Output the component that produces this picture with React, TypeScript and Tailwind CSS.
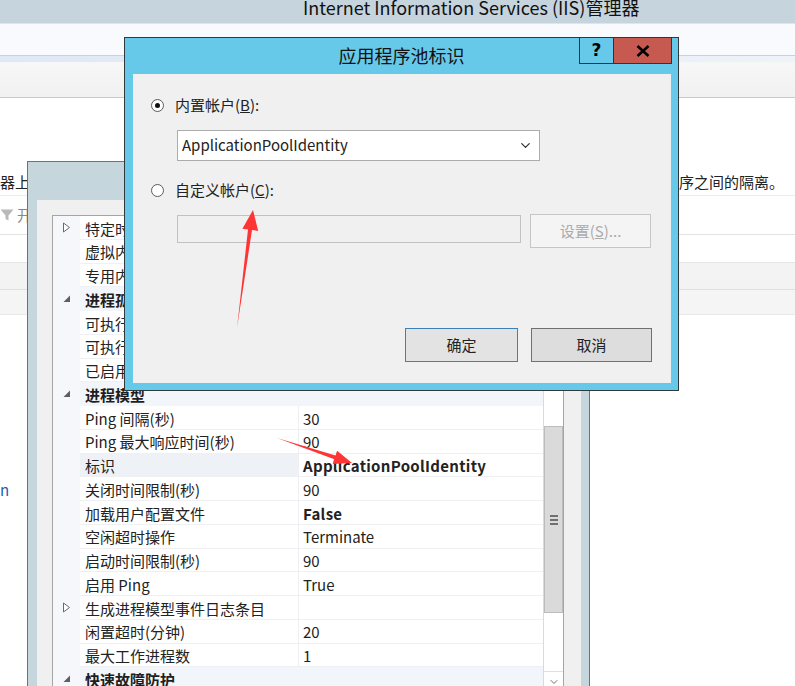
import React from 'react';
import { ChevronDown } from 'lucide-react';

type Row = {
  label: string;
  value?: string;
  cat?: boolean;
  toggle?: boolean;
  bold?: boolean;
  selected?: boolean;
};

const rows: Row[] = [
  { label: '特定时间', toggle: true, value: '' },
  { label: '虚拟内存限制(KB)', value: '0' },
  { label: '专用内存限制(KB)', value: '0' },
  { label: '进程孤立', cat: true },
  { label: '可执行文件', value: '' },
  { label: '可执行文件参数', value: '' },
  { label: '已启用', value: 'False' },
  { label: '进程模型', cat: true },
  { label: 'Ping 间隔(秒)', value: '30' },
  { label: 'Ping 最大响应时间(秒)', value: '90' },
  { label: '标识', value: 'ApplicationPoolIdentity', bold: true, selected: true },
  { label: '关闭时间限制(秒)', value: '90' },
  { label: '加载用户配置文件', value: 'False', bold: true },
  { label: '空闲超时操作', value: 'Terminate' },
  { label: '启动时间限制(秒)', value: '90' },
  { label: '启用 Ping', value: 'True' },
  { label: '生成进程模型事件日志条目', toggle: true, value: '' },
  { label: '闲置超时(分钟)', value: '20' },
  { label: '最大工作进程数', value: '1' },
  { label: '快速故障防护', cat: true },
];

const Collapsed = () => (
  <svg width="9" height="11" viewBox="0 0 9 11">
    <path d="M1.5 1 L7.5 5.5 L1.5 10 Z" fill="white" stroke="#6b6b6b" strokeWidth="1" />
  </svg>
);

const Expanded = () => (
  <svg width="8" height="8" viewBox="0 0 8 8">
    <polygon points="7,0.5 7,7 0.5,7" fill="#5f5f5f" />
  </svg>
);

const GridRow = ({ row }: { row: Row }) => (
  <div className="flex h-[23.75px] shrink-0">
    <div className="w-[27px] shrink-0 flex items-center justify-center bg-[#f5f7fa]">
      {row.cat ? <Expanded /> : row.toggle ? <Collapsed /> : null}
    </div>
    {row.cat ? (
      <div className="flex-1 flex items-center pl-[5px] pt-[3px] bg-[#f2f5fa] font-bold text-[#1e1e1e]">
        {row.label}
      </div>
    ) : (
      <>
        <div
          className={`w-[218px] shrink-0 flex items-center pl-[5px] pt-[3px] border-b border-[#eef0f4] ${
            row.selected ? 'bg-[#eef1f6]' : 'bg-white'
          }`}
        >
          {row.label}
        </div>
        <div
          className={`flex-1 flex items-center pl-[4px] pt-[3px] bg-white border-b border-l border-[#eef0f4] ${
            row.bold ? 'font-bold tracking-[0.3px]' : ''
          }`}
        >
          {row.value}
        </div>
      </>
    )}
  </div>
);

const Radio = ({ checked }: { checked?: boolean }) => (
  <span className="w-[13px] h-[13px] rounded-full border border-[#5c5c5c] bg-white flex items-center justify-center shrink-0">
    {checked && <span className="w-[5px] h-[5px] rounded-full bg-[#111]" />}
  </span>
);

export default function App() {
  return (
    <div className="relative w-[795px] h-[686px] overflow-hidden bg-white text-[15px] text-[#222] font-['Noto_Sans_CJK_SC','Noto_Sans',sans-serif]">
      {/* IIS manager behind everything */}
      <div className="flex flex-col w-full">
        <div className="h-[24px] bg-[#c6d4dd] pl-[303px] text-[18px] leading-[14px] text-[#111] border-b border-[#dfe6ea]">
          Internet Information Services (IIS)管理器
        </div>
        <div className="h-[32px] bg-[#f9fafd] border-b border-[#cdd1d6]" />
        <div className="h-[6px] bg-gradient-to-r from-[#dfe8f6] to-[#eef2f9]" />
        <div className="h-[36px] bg-gradient-to-b from-[#f7f7f7] to-[#f1f1f1] border-b border-[#c9c9c9]" />
        <div className="h-[72px]" />
        <div className="flex h-[26px] items-center border-b border-[#ececec]">
          <span className="w-[679px] shrink-0">器上</span>
          <span>序之间的隔离。</span>
        </div>
        <div className="flex items-center h-[39px] gap-[3px] text-[#888] border-b border-[#e3e3e3]">
          <svg width="14" height="14" viewBox="0 0 14 14">
            <path d="M0.5 1.5 H13.5 L8.5 7.5 V12.5 L5.5 11 V7.5 Z" fill="#b9b9b9" />
          </svg>
          <span>开</span>
        </div>
        <div className="h-[28px] border-b border-[#e6e6e6]" />
        <div className="h-[27px] bg-[#f3f3f3] border-b border-[#e0e0e0]" />
        <div className="h-[25px] bg-[#f5f5f5] border-b border-[#e8e8e8]" />
        <div className="pt-[164px] text-[#1c5cb0]">n</div>
      </div>

      {/* advanced settings window */}
      <div className="absolute left-[27px] top-[161px] w-[563px] h-[540px] bg-[#c5d6dc] border-t border-l border-r border-[#66757c] pt-[38px] pl-[9px] pr-[8px]">
        <div className="h-full bg-[#f0f0f0] pt-[15px] pl-[15px] pr-[17px]">
          <div className="h-full flex border-l border-t border-r border-[#a5a5a5] bg-white">
            <div className="flex-1 flex flex-col">
              {rows.map((r, i) => (
                <GridRow key={i} row={r} />
              ))}
            </div>
            <div className="w-[20px] shrink-0 flex flex-col bg-white border-l border-[#dadada]">
              <div className="h-[20px]" />
              <div className="h-[190px]" />
              <div className="h-[187px] bg-[#dadada] border border-[#bcbcbc] flex items-center justify-center">
                <div className="flex flex-col gap-[2px]">
                  <div className="w-[8px] h-[2px] bg-[#707070]" />
                  <div className="w-[8px] h-[2px] bg-[#707070]" />
                  <div className="w-[8px] h-[2px] bg-[#707070]" />
                </div>
              </div>
              <div className="h-[58px]" />
              <div className="h-[20px] flex items-center justify-center border-t border-[#e0e0e0]">
                <ChevronDown size={12} color="#707070" strokeWidth={2} />
              </div>
            </div>
          </div>
        </div>
      </div>

      {/* application pool identity dialog */}
      <div className="absolute left-[124px] top-[37px] w-[555px] h-[354px] bg-[#66c9e9] border border-[#2f3a3f] flex flex-col">
        <div className="relative h-[36px] shrink-0 flex items-center justify-center pb-[2px] text-[18px] text-[#111]">
          应用程序池标识
          <div className="absolute right-[6px] -top-[1px] flex">
            <div className="w-[35px] h-[27px] border border-[#333] flex items-center justify-center text-[17px] font-bold text-black font-['DejaVu_Sans',sans-serif]">
              ?
            </div>
            <div className="w-[58px] h-[27px] border border-l-0 border-[#333] bg-[#c75a50] flex items-center justify-center">
              <svg width="14" height="12" viewBox="0 0 14 12">
                <path d="M1.5 1 L12.5 11 M12.5 1 L1.5 11" stroke="black" strokeWidth="2.6" />
              </svg>
            </div>
          </div>
        </div>
        <div className="flex-1 ml-[8px] mr-[7px] mb-[7px] bg-[#f0f0f0] flex flex-col">
          <div className="flex items-center h-[20px] mt-[21px] pl-[18px] gap-[11px]">
            <Radio checked />
            <span>
              内置帐户(<u>B</u>):
            </span>
          </div>
          <div className="ml-[44px] mt-[15px] w-[363px] h-[31px] bg-white border border-[#acacac] flex items-center justify-between pl-[4px] pr-[6px]">
            <span>ApplicationPoolIdentity</span>
            <ChevronDown size={15} color="#333" strokeWidth={2} />
          </div>
          <div className="flex items-center h-[20px] mt-[19px] pl-[18px] gap-[11px]">
            <Radio />
            <span>
              自定义帐户(<u>C</u>):
            </span>
          </div>
          <div className="flex items-start mt-[14px] ml-[44px] gap-[9px]">
            <div className="mt-[1px] w-[344px] h-[28px] border border-[#c2c2c2] bg-[#f0f0f0]" />
            <div className="w-[121px] h-[34px] border border-[#c6c6c6] bg-[#f4f4f4] text-[#ababab] flex items-center justify-center">
              设置(<u>S</u>)...
            </div>
          </div>
          <div className="flex mt-[80px] ml-[272px] gap-[13px]">
            <div className="w-[113px] h-[34px] border border-[#3f80b6] bg-[#e3e3e3] flex items-center justify-center">
              确定
            </div>
            <div className="w-[121px] h-[34px] border border-[#707070] bg-[#dddddd] flex items-center justify-center">
              取消
            </div>
          </div>
        </div>
      </div>

      {/* red annotation arrows */}
      <svg className="absolute left-0 top-0 pointer-events-none" width="795" height="686">
        <polygon
          points="237,328 248,229.5 242.4,228.7 253,210 258.2,230.9 252,230.1"
          fill="#ff3434"
        />
        <polygon
          points="277,438 335.5,455.4 337.1,450.7 352,463 332.7,463.9 334.3,459.2"
          fill="#ff3434"
        />
      </svg>
    </div>
  );
}
